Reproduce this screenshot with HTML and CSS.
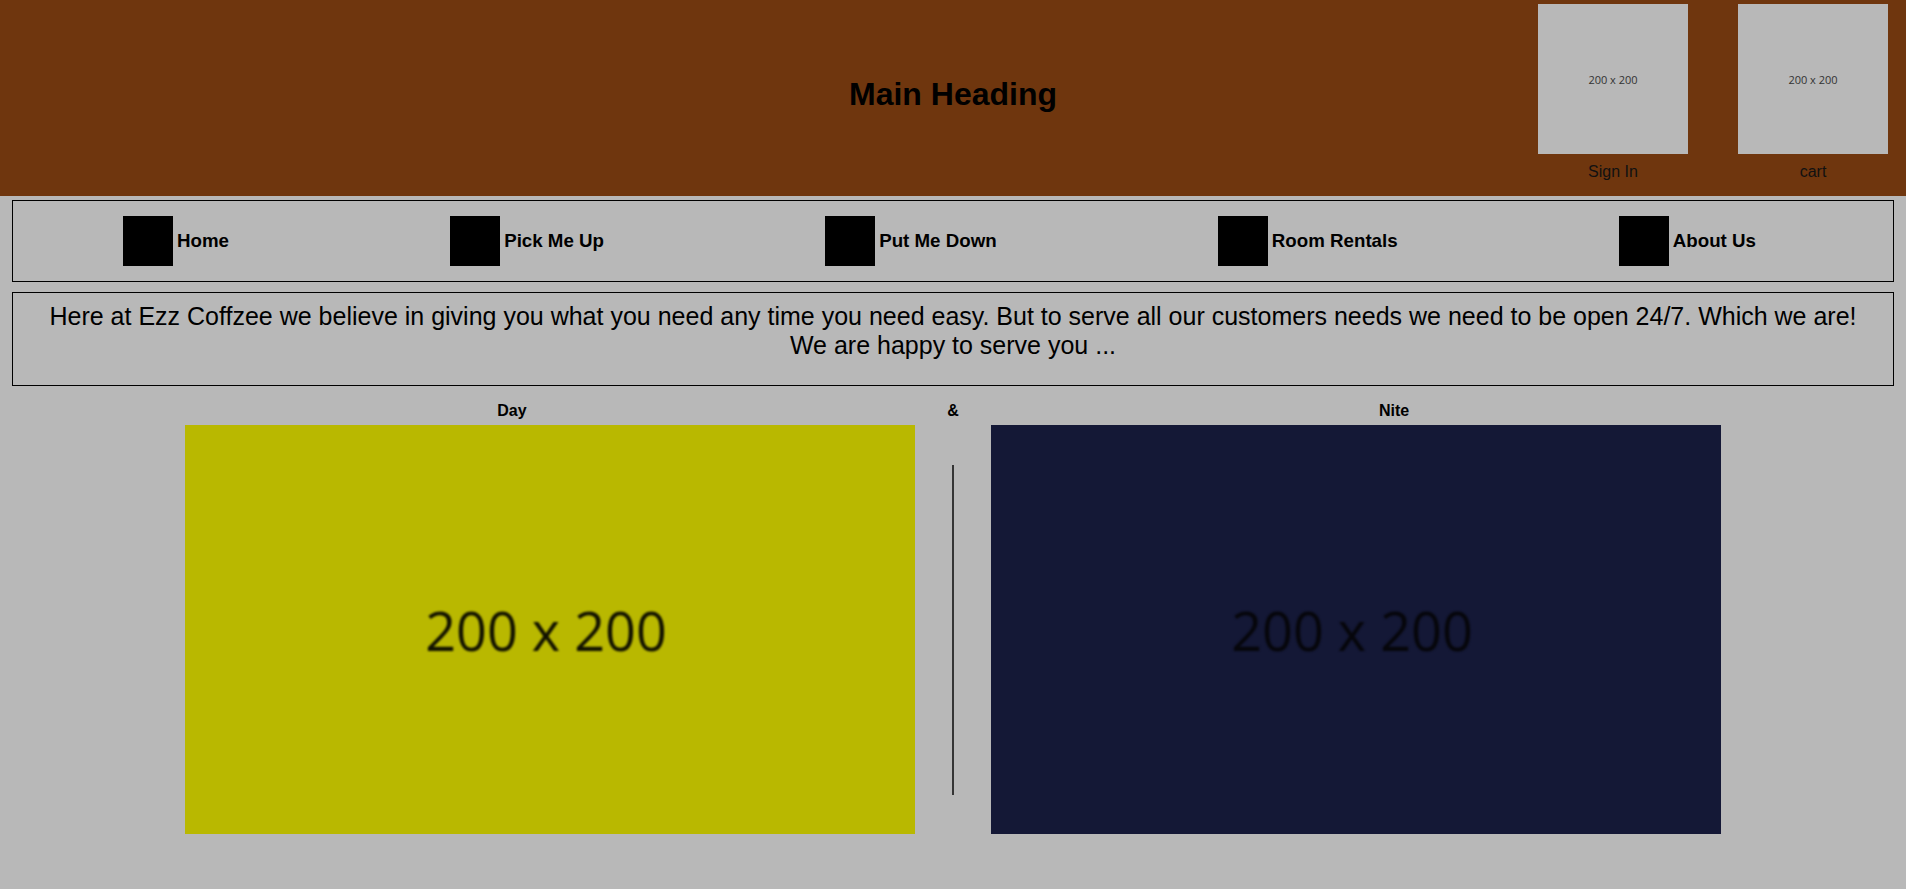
FILE: index.html
```
<!doctype html>
<html lang="en-us">
	<head>
		<meta charset="utf-8">
		<title>Ezz Coffzee</title>
		<link rel="stylesheet" href="styles.css">
	</head>
	<body>
		<header class="top">
			<div></div>
			<h1 class="main_heading">Main Heading</h1>
			<div class="account">
				<div class="account_item">
					<div class="thumb"><span>200 x 200</span></div>
					<div class="caption">Sign In</div>
				</div>
				<div class="account_item">
					<div class="thumb"><span>200 x 200</span></div>
					<div class="caption">cart</div>
				</div>
			</div>
		</header>

		<div class="page">
			<nav class="menu">
				<a class="menu_item" href="#"><span class="menu_icon"></span>Home</a>
				<a class="menu_item" href="#"><span class="menu_icon"></span>Pick Me Up</a>
				<a class="menu_item" href="#"><span class="menu_icon"></span>Put Me Down</a>
				<a class="menu_item" href="#"><span class="menu_icon"></span>Room Rentals</a>
				<a class="menu_item" href="#"><span class="menu_icon"></span>About Us</a>
			</nav>

			<div class="intro">
				Here at Ezz Coffzee we believe in giving you what you need any time you need easy. But to serve all our customers needs we need to be open 24/7. Which we are!<br>
				We are happy to serve you ...
			</div>

			<div class="hours">
				<div class="hours_label">Day</div>
				<div class="hours_label">&amp;</div>
				<div class="hours_label">Nite</div>

				<div class="shot shot_day"><span>200 x 200</span></div>
				<div class="divider"><div class="divider_line"></div></div>
				<div class="shot shot_nite"><span>200 x 200</span></div>
			</div>
		</div>
	</body>
</html>
```

FILE: styles.css
```
body {
	font-family: "Liberation Sans", Arial, sans-serif;
	margin: 0;
	padding: 0;
	background-color: #b8b8b8;
	color: #000;
}

/* header */
.top {
	display: grid;
	grid-template-columns: 1fr auto 1fr;
	height: 196px;
	background-color: #6f360e;
}

.main_heading {
	margin: 0;
	padding-top: 76px;
	font-size: 32px;
	line-height: 36.8px;
}

.account {
	display: flex;
	justify-content: flex-end;
	gap: 50px;
	padding: 4px 18px 0 0;
}

.account_item { width: 150px; text-align: center; }

.thumb {
	width: 150px;
	height: 150px;
	display: flex;
	align-items: center;
	justify-content: center;
	background-color: #b8b8b8;
	color: #333;
	font-family: "Open Sans", sans-serif;
	font-size: 11px;
}

.caption {
	margin-top: 9px;
	font-size: 16px;
	color: #111;
}

/* content */
.page { padding: 4px 12px 0 12px; }

.menu {
	display: flex;
	align-items: center;
	justify-content: space-between;
	height: 80px;
	padding: 0 137px 0 110px;
	border: 1px solid #000;
}

.menu_item {
	display: inline-flex;
	align-items: center;
	gap: 4px;
	color: #000;
	text-decoration: none;
	font-weight: bold;
	font-size: 18.72px;
}

.menu_icon { width: 50px; height: 50px; background-color: #000; }

.intro {
	margin-top: 10px;
	padding: 9px 10px 26px 10px;
	border: 1px solid #000;
	text-align: center;
	font-size: 25px;
	line-height: 28.5px;
}

.hours {
	display: grid;
	grid-template-columns: 806px 76px 806px;
	justify-content: center;
	row-gap: 5px;
	margin-top: 16px;
}

.hours_label {
	text-align: center;
	font-weight: bold;
	font-size: 16px;
	line-height: 18px;
}

.shot {
	width: 730px;
	height: 409px;
	display: flex;
	align-items: center;
	justify-content: center;
	font-family: "Open Sans", sans-serif;
	font-size: 54px;
}

.shot span { filter: blur(0.9px); margin-right: 8px; }

.shot_day { justify-self: end; background-color: #b9b800; color: #111100; }
.shot_nite { justify-self: start; background-color: #141836; color: #06060b; }

.divider { display: flex; align-items: center; justify-content: center; }
.divider_line { width: 2px; height: 330px; background-color: #353535; }
```
